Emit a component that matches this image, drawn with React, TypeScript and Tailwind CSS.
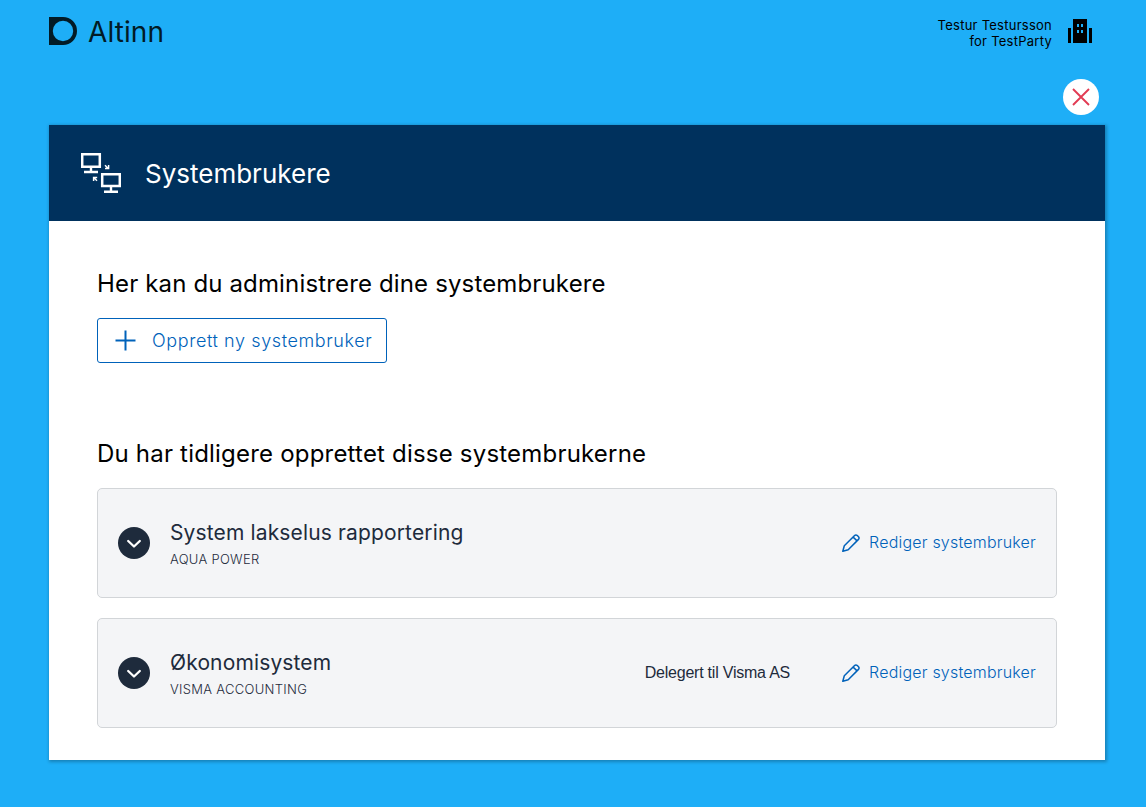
function AltinnMark() {
  return (
    <svg width="28" height="28" viewBox="0 0 28 28" className="block shrink-0">
      <path
        fill="#021b26"
        fillRule="evenodd"
        d="M0 0H14A14 14 0 0 1 14 28H0ZM14 3.8A10.2 10.2 0 1 0 14 24.2A10.2 10.2 0 1 0 14 3.8Z"
      />
    </svg>
  );
}

function BuildingIcon() {
  return (
    <svg width="24" height="24" viewBox="0 0 24 24" className="block shrink-0" shapeRendering="crispEdges">
      <path
        fillRule="evenodd"
        d="M5 0H19V24H5ZM9 5V8H11V5ZM13 5V8H15V5ZM9 11V14H11V11ZM13 11V14H15V11ZM0 9H3V24H0ZM21 9H24V24H21Z"
      />
    </svg>
  );
}

function ComputersIcon() {
  return (
    <svg width="40" height="40" viewBox="0 0 40 40" className="block shrink-0" fill="none" stroke="#fff">
      <path strokeWidth="2.500" d="M1.200 1.200H18.800V13.800H1.200ZM21.200 21.200H38.800V33H21.200Z" />
      <path strokeWidth="2.400" d="M10 14V19M3 19H17M30 33V38.800M23 38.800H37" />
      <path strokeWidth="1.500" d="M24 12.200L27 15.200M27.600 12V15.600H24M16 27.800L13 24.800M12.600 28V24.400H16.200" />
    </svg>
  );
}

function PencilIcon() {
  return (
    <svg
      width="20"
      height="20"
      viewBox="0 0 20 20"
      className="block shrink-0"
      fill="none"
      stroke="#0062ba"
      strokeWidth="1.500"
      strokeLinejoin="round"
    >
      <path d="M1.800 18.300L3.300 12.800L13.600 2.500A1.900 1.900 0 0 1 16.300 2.500L17.500 3.700A1.900 1.900 0 0 1 17.500 6.400L7.200 16.700ZM12.100 4L16 7.900" />
    </svg>
  );
}

type SystemUserProps = { name: string; vendor: string; delegated?: string };

function SystemUser({ name, vendor, delegated }: SystemUserProps) {
  return (
    <li className="flex h-[110px] items-center rounded-[5px] border border-[#d2d5d8] bg-[#f4f5f7] pr-5 pl-5">
      <button className="flex size-8 shrink-0 items-center justify-center rounded-full bg-[#1e2b3c]">
        <svg width="16" height="16" viewBox="0 0 16 16" fill="none" stroke="#fff" strokeWidth="2.300" strokeLinecap="round" strokeLinejoin="round">
          <path d="M2.200 6L8 11.500L13.800 6" />
        </svg>
      </button>
      <div className="ml-5 flex flex-col pt-0.5">
        <span className="text-[21px] leading-7 tracking-[0.14px] text-[#1e2b3c]">{name}</span>
        <span className="mt-0.5 text-[13px] leading-5 font-light tracking-[0.3px] text-[#1e2b3c] uppercase">{vendor}</span>
      </div>
      <div className="ml-auto flex items-center">
        {delegated && (
          <span className="mr-[51px] font-['Liberation_Sans',sans-serif] text-base leading-6 tracking-[-0.22px] text-[#1e2b3c]">
            {delegated}
          </span>
        )}
        <a className="flex items-center gap-2 text-base leading-6 font-light tracking-[0.2px] text-[#0062ba]">
          <PencilIcon />
          <span className="pb-0.5">Rediger systembruker</span>
        </a>
      </div>
    </li>
  );
}

export default function App() {
  return (
    <div className="flex h-[807px] w-[1146px] flex-col bg-[#1eaef7] pr-[41px] pl-[49px] font-[Inter,sans-serif] text-black">
      <header className="flex h-[62px] shrink-0 items-center justify-between pr-[13px]">
        <div className="flex items-center gap-[11px]">
          <AltinnMark />
          <span className="pt-0.5 text-[28px] leading-8 tracking-[0.1px] text-[#021b26]">Altinn</span>
        </div>
        <div className="flex items-center gap-4">
          <div className="pt-1 text-right text-[13px] leading-4 tracking-[0.25px]">
            <div>Testur Testursson</div>
            <div>for TestParty</div>
          </div>
          <BuildingIcon />
        </div>
      </header>
      <div className="flex h-[63px] shrink-0 items-start justify-end pt-[17px] pr-1.5">
        <button className="flex size-9 items-center justify-center rounded-full bg-white">
          <svg width="18" height="18" viewBox="0 0 18 18" stroke="#e23b53" strokeWidth="1.900">
            <path d="M1 1L17 17M17 1L1 17" />
          </svg>
        </button>
      </div>
      <main className="flex h-[635px] shrink-0 flex-col bg-white shadow-[1px_1px_3px_1px_rgba(0,0,0,0.25)]">
        <div className="flex h-24 shrink-0 items-center gap-6 bg-[#00315d] pl-8 text-white">
          <ComputersIcon />
          <h1 className="pt-0.5 text-[26px] leading-9">Systembrukere</h1>
        </div>
        <div className="flex flex-col px-12 pt-[45px]">
          <h2 className="text-2xl leading-9 tracking-[0.15px]">Her kan du administrere dine systembrukere</h2>
          <button className="mt-4 flex h-[45px] w-[290px] items-center gap-4 rounded-[3px] border border-[#0062ba] pl-[17px] text-lg font-light tracking-[0.6px] whitespace-nowrap text-[#0062ba]">
            <svg width="21" height="21" viewBox="0 0 21 21" stroke="#0062ba" strokeWidth="2" className="block shrink-0">
              <path d="M10.500 0.500V20.500M0.500 10.500H20.500" />
            </svg>
            Opprett ny systembruker
          </button>
          <h2 className="mt-[73px] text-2xl leading-9 tracking-[0.2px]">Du har tidligere opprettet disse systembrukerne</h2>
          <ul className="mt-4 flex flex-col gap-5">
            <SystemUser name="System lakselus rapportering" vendor="Aqua Power" />
            <SystemUser name="Økonomisystem" vendor="Visma Accounting" delegated="Delegert til Visma AS" />
          </ul>
        </div>
      </main>
    </div>
  );
}
